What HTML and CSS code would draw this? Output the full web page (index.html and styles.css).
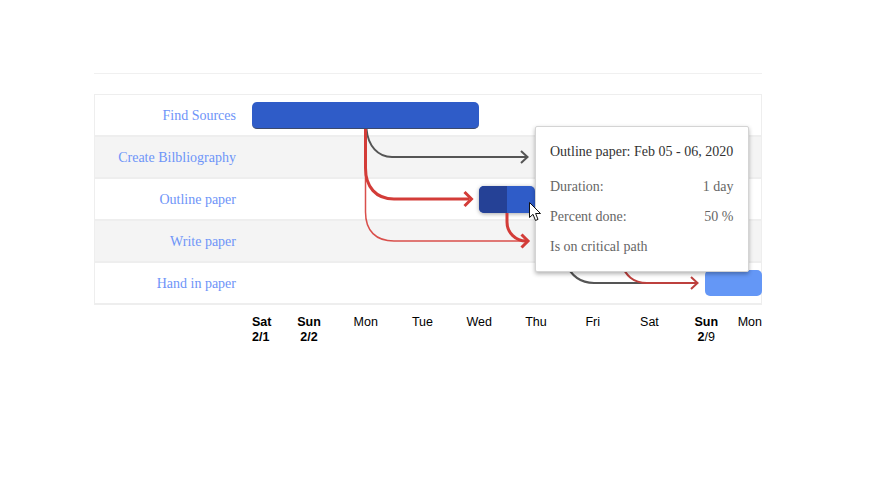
FILE: index.html
```html
<!DOCTYPE html>
<html lang="en">
<head>
<meta charset="utf-8">
<title>Gantt chart</title>
<link rel="stylesheet" href="styles.css">
</head>
<body>
<div class="page">
  <hr class="rule">
  <div class="chart">
    <div class="rows">
      <div class="row"><div class="label">Find Sources</div></div>
      <div class="row alt"><div class="label">Create Bilbliography</div></div>
      <div class="row"><div class="label">Outline paper</div></div>
      <div class="row alt"><div class="label">Write paper</div></div>
      <div class="row"><div class="label">Hand in paper</div></div>
    </div>
    <div class="bar bar-find"></div>
    <div class="bar bar-outline"><div class="bar-done"></div></div>
    <div class="bar bar-hand"></div>
    <svg class="links" width="668" height="210" viewBox="94 94 668 210" fill="none">
      <g stroke="#555" stroke-width="2">
        <path d="M366.500 129C368 146 378 157 392 157H527"/>
        <path d="M521 151L527.500 157L521 163"/>
        <path d="M565 262C571 276 580 283 594 283H650"/>
      </g>
      <g stroke="#d94f4b" stroke-width="1.500">
        <path d="M365.500 129V212C365.500 231 376 241 394 241H526"/>
      </g>
      <g stroke="#d33c38" stroke-width="3">
        <path d="M365.500 129V168C365.500 187 376 199 394 199H469"/>
        <path d="M464.500 192L471.500 199L464.500 206"/>
        <path d="M507 213V222C507 233 516 241 526 241"/>
        <path d="M521.500 234.500L528 241L521.500 247.500"/>
      </g>
      <g stroke="#bd403d" stroke-width="2">
        <path d="M620 262C626 276 633 283 647 283H697"/>
        <path d="M691 277L697.500 283L691 289"/>
      </g>
    </svg>
    <div class="tooltip">
      <div class="tip-title">Outline paper: Feb 05 - 06, 2020</div>
      <div class="tip-line"><span>Duration:</span><span>1 day</span></div>
      <div class="tip-line"><span>Percent done:</span><span>50 %</span></div>
      <div class="tip-line"><span>Is on critical path</span></div>
    </div>
    <svg class="cursor" width="13" height="20" viewBox="0 0 13 20">
      <path d="M0.500 0.500V15.500L4 12.300L6.500 18.500L9 17.400L6.600 11.500H11.500Z" fill="#fff" stroke="#111" stroke-width="1"/>
    </svg>
  </div>
  <div class="axis">
    <div class="tick first"><b>Sat<br>2/1</b></div>
    <div class="tick"><b>Sun<br>2/2</b></div>
    <div class="tick">Mon</div>
    <div class="tick">Tue</div>
    <div class="tick">Wed</div>
    <div class="tick">Thu</div>
    <div class="tick">Fri</div>
    <div class="tick">Sat</div>
    <div class="tick"><b>Sun</b><br><b>2</b>/9</div>
    <div class="tick last">Mon</div>
  </div>
</div>
</body>
</html>
```
FILE: styles.css
```css
html, body {
  margin: 0;
  padding: 0;
  background: #fff;
}
body {
  width: 869px;
  height: 485px;
  overflow: hidden;
}
.page {
  width: 668px;
  margin-left: 94px;
  padding-top: 73px;
}
.rule {
  height: 1px;
  margin: 0 0 20px;
  border: 0;
  background: #f0f0f0;
}
.chart {
  position: relative;
  height: 210px;
}
.rows {
  display: flex;
  flex-direction: column;
  box-sizing: border-box;
  border: 1px solid #eee;
  border-bottom: 0;
}
.row {
  display: flex;
  align-items: center;
  height: 40px;
  flex: none;
  border-bottom: 2px solid #eee;
  background: #fff;
}
.alt {
  background: #f4f4f4;
}
.label {
  width: 141px;
  padding-top: 2px;
  text-align: right;
  font: 14px "Liberation Serif", "Times New Roman", serif;
  color: #6e94f8;
}
.bar {
  position: absolute;
  border-radius: 5px;
  overflow: hidden;
}
.bar-find {
  left: 158px;
  top: 8px;
  width: 227px;
  height: 27px;
  box-sizing: border-box;
  background: #2f5cc8;
  border-bottom: 1px solid #3d4a6b;
}
.bar-outline {
  left: 384.500px;
  top: 92px;
  width: 56.500px;
  height: 27px;
  background: #2f5cc8;
  box-shadow: 0 1px 4px rgba(0, 0, 0, .35);
}
.bar-done {
  width: 28.500px;
  height: 100%;
  background: #254196;
}
.bar-hand {
  left: 611px;
  top: 176px;
  width: 57px;
  height: 26px;
  background: #6497f6;
}
.links {
  position: absolute;
  left: 0;
  top: 0;
}
.tooltip {
  position: absolute;
  left: 441px;
  top: 32px;
  width: 214px;
  height: 146px;
  box-sizing: border-box;
  padding: 15px 14.500px 0 14px;
  background: #fff;
  border: 1px solid #d4d4d4;
  border-radius: 2px;
  box-shadow: 0 2px 4px rgba(0, 0, 0, .3);
  font: 14px/20px "Liberation Serif", "Times New Roman", serif;
  color: #666;
}
.tip-title {
  color: #333;
  white-space: nowrap;
  margin-bottom: 15px;
}
.tip-line {
  display: flex;
  justify-content: space-between;
  margin-bottom: 10px;
}
.cursor {
  position: absolute;
  left: 435px;
  top: 108px;
}
.axis {
  display: flex;
  padding-top: 11px;
  padding-left: 158px;
  font: 12.500px/15px "Liberation Sans", Arial, sans-serif;
  color: #000;
}
.tick {
  width: 56.750px;
  flex: none;
  text-align: center;
}
.first {
  width: 28.600px;
  text-align: left;
}
.last {
  width: 27.400px;
  text-align: right;
  white-space: nowrap;
  direction: rtl;
}
```
